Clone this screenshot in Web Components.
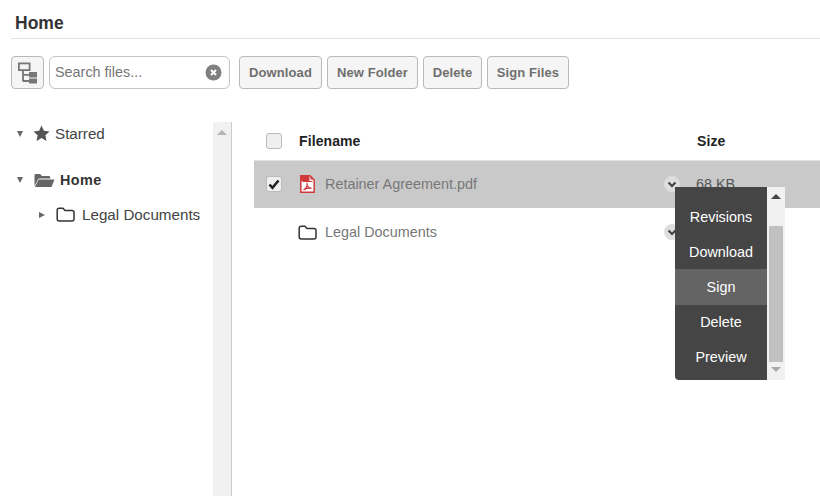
<!DOCTYPE html>
<html><head><meta charset="utf-8"><style>
html,body{margin:0;height:100%;background:#fff}
body{font-family:"Liberation Sans",Arial,sans-serif;font-size:14px;color:#333;width:820px;height:496px;overflow:hidden}
</style></head><body>
<file-manager></file-manager>
<script>
const folderPath='M1.2 3.2Q1.2 1.2 3.2 1.2H7L9 3.4H16Q18 3.4 18 5.4V12Q18 14 16 14H3.2Q1.2 14 1.2 12Z';
function def(name,style,html){
  customElements.define(name,class extends HTMLElement{
    constructor(){super();this.attachShadow({mode:'open'}).innerHTML='<style>'+style+'</style>'+html}
  });
}
def('tool-button',`:host{display:inline-flex}
button{box-sizing:border-box;height:33px;width:var(--w,auto);padding:0;border:1px solid #b9b9b9;border-radius:4px;background:#f5f5f5;color:#6f6f6f;font:bold 13px "Liberation Sans",Arial,sans-serif;letter-spacing:.1px;display:flex;align-items:center;justify-content:center}
:host([icon]) button{width:33px}`,`<button><slot></slot></button>`);
def('search-box',`:host{display:flex;box-sizing:border-box;width:181px;height:33px;border:1px solid #c4c4c4;border-radius:6px;align-items:center;padding:0 7px 0 5px;justify-content:space-between;color:#757575;font-size:14.4px}
span{padding-bottom:2px}
svg{display:block}`,`<span>Search files...</span><svg width="17" height="17" viewBox="0 0 17 17"><circle cx="8.5" cy="8.5" r="8" fill="#808080"/><path d="M6 6l5 5M11 6l-5 5" stroke="#fff" stroke-width="2"/></svg>`);
def('tree-row',`:host{display:flex;align-items:center;box-sizing:border-box;height:24px;padding-bottom:2px;font-size:15.2px;color:#444;white-space:nowrap}
.a{width:0;height:0;flex:none;margin-top:2px}
:host([open]) .a{border-left:3px solid transparent;border-right:3px solid transparent;border-top:6px solid #666}
:host(:not([open])) .a{border-top:3px solid transparent;border-bottom:3px solid transparent;border-left:6px solid #666}
.i{display:flex;margin:0 5px 0 10px}
:host([bold]){padding-bottom:0;font-weight:bold;font-size:14.4px;color:#333;letter-spacing:.4px}
:host([bold]) .a{margin-top:0}`,`<span class="a"></span><span class="i"><slot name="icon"></slot></span><slot></slot>`);
def('scroll-bar',`:host{display:flex;flex-direction:column;align-items:center;background:#f1f1f1;box-sizing:border-box;width:18px;height:100%}
.up,.dn{width:0;height:0;border-left:5px solid transparent;border-right:5px solid transparent;flex:none}
.up{border-bottom:5px solid var(--arrow,#b5b5b5);margin-top:var(--top,7px)}
.dn{border-top:5px solid #a8a8a8;margin-top:auto;margin-bottom:8px;display:var(--dn,none)}
.th{background:#c1c1c1;width:14px;display:var(--th,none);flex:none;margin-top:var(--thm,0);height:var(--thh,0)}`,`<span class="up"></span><span class="th"></span><span class="dn"></span>`);
def('side-tree',`:host{display:flex;box-sizing:border-box;width:232px;height:374px;border-right:1px solid #ccc;margin-top:33px}
.c{flex:1;padding:0 0 0 17px;display:flex;flex-direction:column}
.sub{margin-left:22px;margin-top:11px}
.h{margin-top:22px}
scroll-bar{flex:none}`,`<div class="c"><tree-row open><svg slot="icon" width="17" height="16" viewBox="0 0 17 16"><path d="M8.5.5l2.4 5.2 5.6.7-4.1 3.9 1.1 5.6-5-2.8-5 2.8 1.1-5.6L.5 6.4l5.6-.7z" fill="#555"/></svg>Starred</tree-row>
<tree-row open bold class="h"><svg slot="icon" width="21" height="15" viewBox="0 0 21 15" style="margin:0 0 0 1px"><path d="M.5 13V2.2Q.5 1 1.7 1H6l2 2h7q1.2 0 1.2 1.2V5.5H5.5Q4.3 5.5 3.9 6.5Z" fill="#666"/><path d="M4.5 6.5H20.500L17.500 14H.9Z" fill="#666"/></svg>Home</tree-row>
<tree-row class="sub"><svg slot="icon" width="19" height="15" viewBox="0 0 19 15" style="margin:0 2px 0 1px"><path d="${folderPath}" fill="none" stroke="#333" stroke-width="1.5"/></svg>Legal Documents</tree-row></div><scroll-bar style="--top:8px"></scroll-bar>`);
def('round-toggle',`:host{display:flex;width:16px;height:16px;border-radius:50%;background:#dedede;align-items:center;justify-content:center}`,`<svg width="10" height="7" viewBox="0 0 10 7"><path d="M1.500 1.500L5 5l3.500-3.500" fill="none" stroke="#444" stroke-width="2.200"/></svg>`);
def('check-box',`:host{display:flex;box-sizing:border-box;width:16px;height:16px;border:1px solid #bbb;border-radius:3px;background:#efefef;align-items:center;justify-content:center}`,`<slot></slot>`);
def('file-row',`:host{display:flex;align-items:center;box-sizing:border-box;height:48px;padding-left:12px;font-size:14.4px;color:#777;white-space:nowrap}
:host([selected]){background:#c9c9c9;border-top:1px solid #e0e0e0;padding-bottom:1px}
.ck{width:16px;flex:none}
.ic{width:20px;margin-left:15px;margin-right:8px;display:flex;justify-content:center;flex:none}
.n{width:339px;flex:none}
.s{margin-left:16px;color:#555}`,`<span class="ck"><slot name="check"></slot></span><span class="ic"><slot name="icon"></slot></span><span class="n"><slot></slot></span><round-toggle></round-toggle><span class="s"><slot name="size"></slot></span>`);
def('file-table',`:host{display:block;flex:1;padding-top:40px;min-width:0}
.hd{display:flex;align-items:center;height:24px;margin-left:34px;font-size:14px;color:#222;letter-spacing:.1px}
.hd b{font-weight:bold}
.hd b:first-of-type{margin-left:17px;width:398px}
.rows{margin-left:22px;margin-top:7px}`,`<div class="hd"><check-box></check-box><b>Filename</b><b>Size</b></div><div class="rows"><slot></slot></div>`);
def('menu-item',`:host{display:flex;height:35px;align-items:center;justify-content:center;font-size:14.4px;color:#fff}
:host([active]){background:#646464;height:36px;margin-bottom:-1px}`,`<slot></slot>`);
def('action-menu',`:host{position:absolute;left:675px;top:187px;width:110px;height:193px;display:flex;--th:block;--thm:27px;--thh:136px;--dn:block;--arrow:#444;--top:7px}
.m{box-sizing:border-box;width:92px;height:193px;background:#454545;border-radius:0 0 0 4px;padding-top:12px;flex:none}`,`<div class="m"><slot></slot></div><scroll-bar></scroll-bar>`);
def('page-head',`:host{display:block;margin-left:11px;border-bottom:1px solid #e2e2e2;height:39px;box-sizing:border-box;padding:14px 0 0 4px;font-weight:bold;font-size:17.5px;line-height:18px;color:#333}`,`<slot></slot>`);
def('tool-bar',`:host{display:flex;align-items:center;margin:17px 0 0 11px;gap:5px}`,`<slot></slot>`);
def('file-manager',`:host{display:block;position:relative;width:820px;height:496px}
.b{display:flex}
.sp{width:4px;margin-left:-5px}`,`<page-head>Home</page-head>
<tool-bar><tool-button icon><svg width="21" height="22" viewBox="0 0 21 22"><rect x="1.9" y="1.4" width="10.700" height="6.700" fill="none" stroke="#777" stroke-width="1.800"/><path d="M6 8v11.500M6 12.800h6M6 19h6" fill="none" stroke="#777" stroke-width="1.800"/><rect x="12" y="10" width="8" height="5.500" fill="#777"/><rect x="12" y="16.500" width="8" height="5" fill="#777"/></svg></tool-button><search-box></search-box><span class="sp"></span><tool-button style="--w:83px">Download</tool-button><tool-button style="--w:91px">New Folder</tool-button><tool-button style="--w:59px">Delete</tool-button><tool-button style="--w:82px">Sign Files</tool-button></tool-bar>
<div class="b"><side-tree></side-tree><file-table>
<file-row selected><check-box slot="check"><svg width="12" height="11" viewBox="0 0 12 11"><path d="M1.500 5.500L4.500 8.800 10.500 1.500" fill="none" stroke="#222" stroke-width="2.600"/></svg></check-box><svg slot="icon" width="15" height="18" viewBox="0 0 15 18"><path d="M.8.800H10L14.200 5V17.200H.8Z" fill="#fff" stroke="#d0383c" stroke-width="1.500"/><rect x="1" y="1" width="8.500" height="5" fill="#d0383c"/><path d="M10.500 1V4.500H14Z" fill="#d0383c"/><path d="M2.500 6.500H12.500" stroke="#d0383c" stroke-width="1"/><path d="M3.500 15C6 14 8 10.500 7 8.500c-.8 2 1.500 4.500 4.500 4.800C9 12.800 6 13 3.500 15Z" fill="none" stroke="#d0383c" stroke-width="1.200"/></svg>Retainer Agreement.pdf<span slot="size">68 KB</span></file-row>
<file-row><svg slot="icon" width="19" height="15" viewBox="0 0 19 15"><path d="${folderPath}" fill="none" stroke="#333" stroke-width="1.5"/></svg>Legal Documents</file-row>
</file-table></div>
<action-menu><menu-item>Revisions</menu-item><menu-item>Download</menu-item><menu-item active>Sign</menu-item><menu-item>Delete</menu-item><menu-item>Preview</menu-item></action-menu>`);
</script>
</body></html>
